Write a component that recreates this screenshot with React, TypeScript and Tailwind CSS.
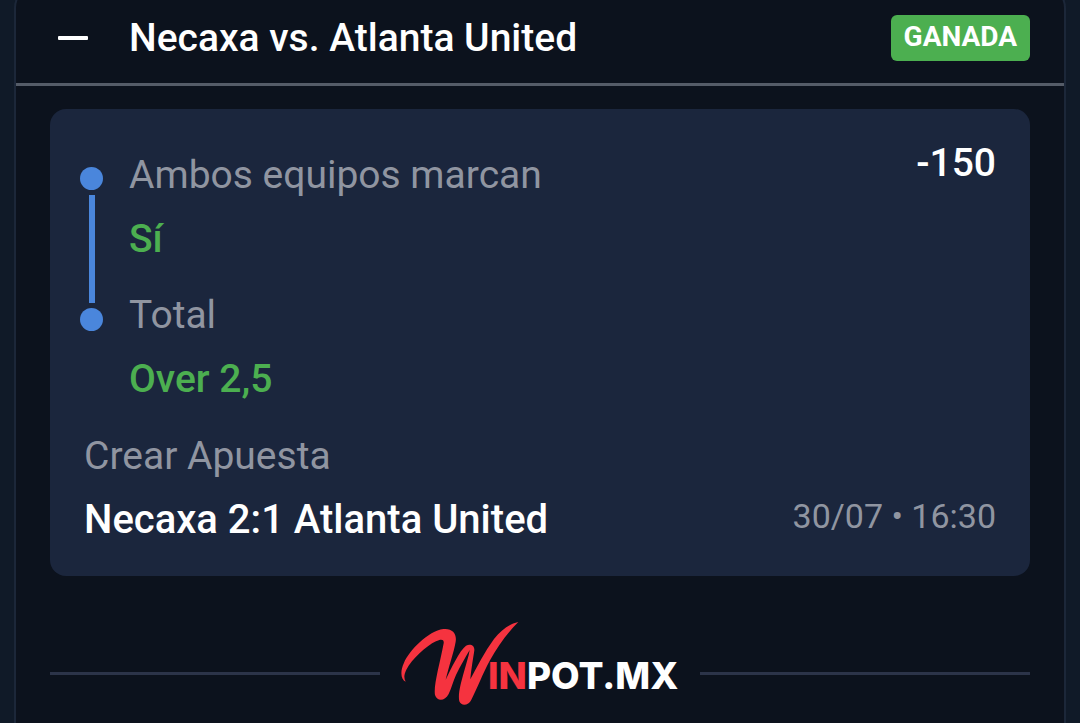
interface Selection {
  market: string
  pick: string
}

const selections: Selection[] = [
  { market: 'Ambos equipos marcan', pick: 'Sí' },
  { market: 'Total', pick: 'Over 2,5' }
]

function Logo() {
  return (
    <svg
      viewBox="30 30 840 255"
      className="h-[85px] w-[280px] shrink-0 overflow-visible"
      role="img"
      aria-label="Winpot.mx"
    >
      <path
        fill="#f5333f"
        d="M47 212C32 206 30 180 42 155C58 118 115 60 160 54C187 51 201 68 197 92C192 122 176 168 167 206C184 172 208 119 228 104C242 97 254 104 253 118C250 140 244 172 241 205C262 166 284 122 312 84C335 55 360 38 385 33C352 66 324 104 300 148C278 188 262 232 244 266C236 284 214 287 208 271C203 250 213 214 222 182C229 157 236 136 239 117C226 140 211 165 198 192C190 210 185 230 176 249C165 271 141 272 135 252C130 224 149 160 161 97C163 84 152 84 138 91C108 105 66 144 49 176C42 190 41 202 47 212Z"
      />
      <text x="294" y="235" fontSize="111" fontWeight="800" fontFamily="Inter, sans-serif">
        <tspan fill="#f5333f">IN</tspan>
        <tspan fill="#ffffff">POT.MX</tspan>
      </text>
    </svg>
  )
}

function Timeline() {
  return (
    <div className="mt-6 flex w-[23px] shrink-0 flex-col items-center gap-[5px]">
      <div className="size-[23px] rounded-full bg-[#4a86dc]" />
      <div className="h-[108px] w-[6px] bg-[#4a86dc]" />
      <div className="size-[23px] rounded-full bg-[#4a86dc]" />
    </div>
  )
}

export default function App() {
  return (
    <div className="flex min-h-screen flex-col overflow-hidden bg-[#101a28] px-[14px] font-[Roboto,sans-serif] text-[39px] leading-10 text-white">
      <main className="-mt-4 flex-1 rounded-t-3xl border-2 border-b-0 border-[#1c2739] bg-[#0c121d] pt-[14px] pb-4">
        <header className="flex items-center border-b-[3px] border-[#555c68] px-[34px] pt-[15px] pb-[22px]">
          <button type="button" aria-label="Contraer" className="mr-[34px] flex w-[45px] shrink-0 justify-center">
            <svg viewBox="0 0 32 6" className="h-[6px] w-8">
              <rect x="1" y="1" width="30" height="4" rx="1" fill="#ffffff" />
            </svg>
          </button>
          <h1 className="flex-1 font-medium">Necaxa vs. Atlanta United</h1>
          <span className="rounded-md bg-[#4caf50] px-[13px] pt-0.5 pb-1 text-[28px] font-bold">GANADA</span>
        </header>

        <div className="px-[34px] pt-[23px]">
          <section className="rounded-2xl bg-[#1b263d] pt-[34px] pr-[34px] pb-9 pl-[30px]">
            <div className="flex items-start">
              <Timeline />
              <dl className="mt-3 ml-[26px] flex flex-1 flex-col gap-9">
                {selections.map(s => (
                  <div key={s.market} className="flex flex-col gap-6">
                    <dt className="text-[#9095a1]">{s.market}</dt>
                    <dd className="font-medium text-[#4caf50]">{s.pick}</dd>
                  </div>
                ))}
              </dl>
              <span className="font-medium">-150</span>
            </div>

            <p className="mt-[37px] pl-1 text-[#9095a1]">Crear Apuesta</p>
            <div className="mt-6 flex items-start justify-between pl-1">
              <strong className="text-[40px] font-medium">Necaxa 2:1 Atlanta United</strong>
              <time className="text-[34px] leading-8 text-[#9095a1]">30/07 • 16:30</time>
            </div>
          </section>

          <footer className="mt-[45px] flex items-center gap-5">
            <div className="mt-5 h-[3px] flex-1 bg-[#2c3449]" />
            <Logo />
            <div className="mt-5 h-[3px] flex-1 bg-[#2c3449]" />
          </footer>
        </div>
      </main>
    </div>
  )
}
